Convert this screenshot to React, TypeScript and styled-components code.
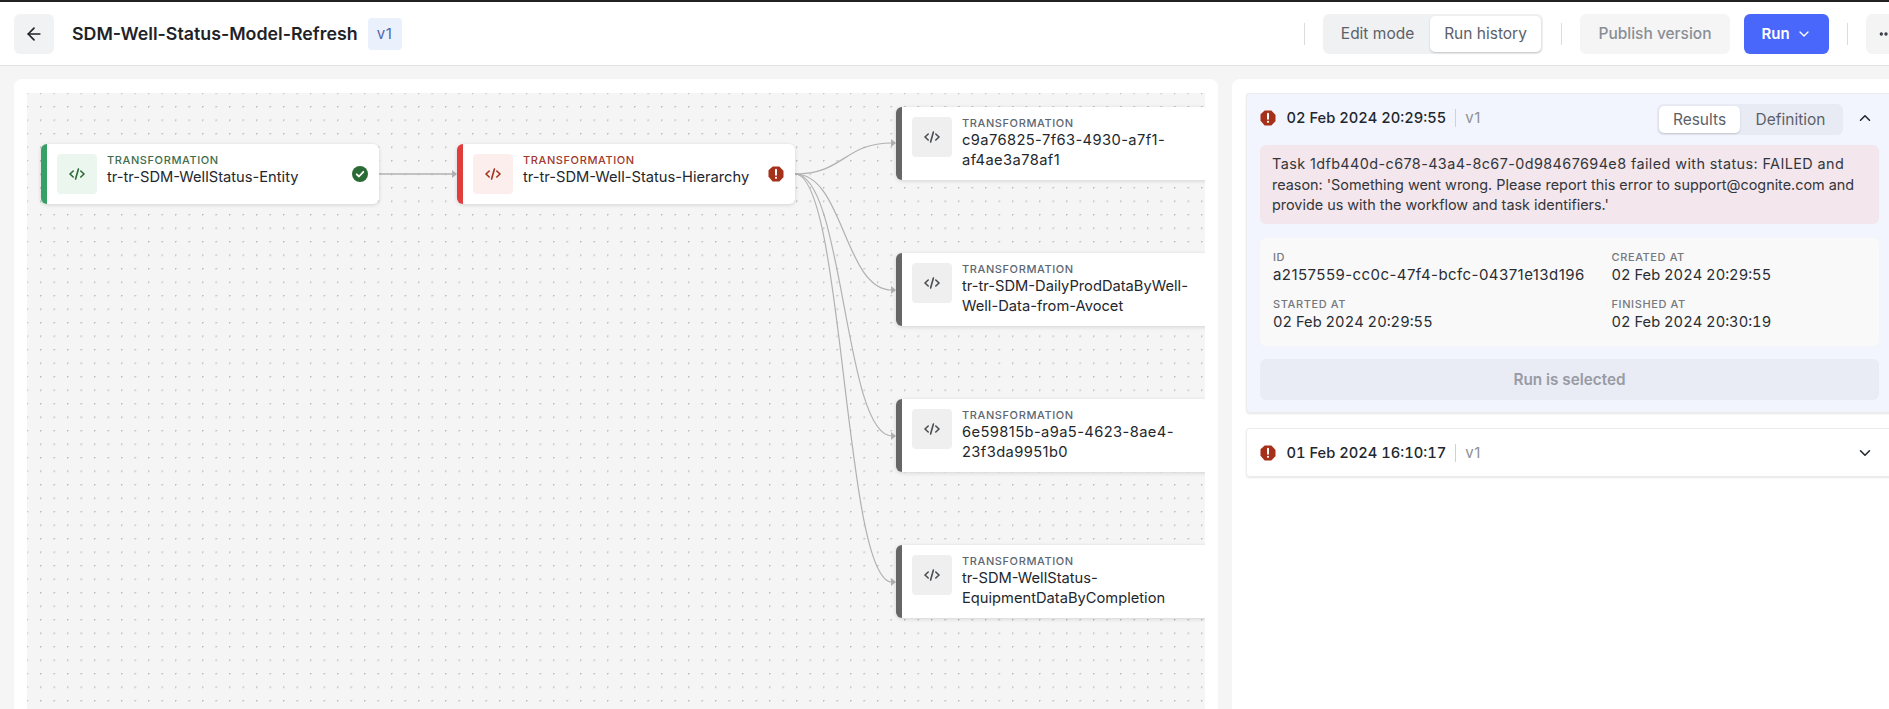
import React from "react";
import styled, { createGlobalStyle } from "styled-components";
import { ArrowLeft, ChevronDown, ChevronUp, Ellipsis } from "lucide-react";

const Global = createGlobalStyle`
  html, body { margin: 0; padding: 0; background: #f5f5f5; }
  body { font-family: Inter, "Liberation Sans", sans-serif; color: #1f2328; }
  * { box-sizing: border-box; }
`;

const Page = styled.div`
  width: 1889px;
  height: 709px;
  overflow: hidden;
  background: #f5f5f5;
  border-top: 2px solid #222222;
`;

const Header = styled.header`
  width: 1906px;
  height: 64px;
  padding: 11px 0 11px 14px;
  display: flex;
  align-items: center;
  justify-content: space-between;
  background: #ffffff;
  border-bottom: 1px solid #e2e2e2;
`;

const HeaderGroup = styled.div`
  display: flex;
  align-items: center;
`;

const IconButton = styled.button`
  width: 40px;
  height: 40px;
  border: 0;
  border-radius: 6px;
  background: #f1f2f4;
  color: #1f2328;
  display: flex;
  align-items: center;
  justify-content: center;
  padding: 0;
`;

const Title = styled.h1`
  margin: 0 10px 0 18px;
  font-size: 17.8px;
  line-height: 24px;
  font-weight: 600;
  color: #1f2328;
`;

const VersionBadge = styled.span`
  width: 34px;
  height: 32px;
  border-radius: 4px;
  background: #ebf0fd;
  color: #4f68ad;
  font-size: 15px;
  letter-spacing: 0.6px;
  display: flex;
  align-items: center;
  justify-content: center;
`;

const Divider = styled.span`
  width: 1px;
  height: 22px;
  background: #dcdcdc;
  margin: 0 18px;
`;

const Segmented = styled.div`
  width: 220px;
  height: 40px;
  padding: 2px;
  border-radius: 6px;
  background: #f0f1f3;
  display: flex;
`;

const Segment = styled.div<{ $active?: boolean; $width: number }>`
  width: ${(p) => p.$width}px;
  border-radius: 5px;
  display: flex;
  align-items: center;
  justify-content: center;
  font-size: 15.5px;
  color: #5c6169;
  background: ${(p) => (p.$active ? "#ffffff" : "transparent")};
  box-shadow: ${(p) => (p.$active ? "0 1px 2px rgba(0,0,0,.18)" : "none")};
`;

const PublishButton = styled.button`
  width: 150px;
  height: 40px;
  border: 0;
  border-radius: 6px;
  background: #f5f5f6;
  color: #8a8e94;
  font: 500 15.5px Inter, sans-serif;
`;

const RunButton = styled.button`
  width: 85px;
  height: 40px;
  margin-left: 14px;
  border: 0;
  border-radius: 6px;
  background: #4a67fb;
  color: #ffffff;
  font: 600 15px Inter, sans-serif;
  display: flex;
  align-items: center;
  justify-content: center;
  gap: 6px;
`;

const MoreButton = styled(IconButton)`
  background: #f4f4f5;
  color: #33373d;
`;

const Main = styled.main`
  height: 643px;
  padding: 13px 0 0 14px;
  display: flex;
  gap: 14px;
`;

const CanvasPanel = styled.section`
  flex: 0 0 1204px;
  padding: 14px 13px 0;
  border-radius: 8px 8px 0 0;
  background: #ffffff;
`;

const Canvas = styled.div`
  position: relative;
  height: 100%;
  overflow: hidden;
  background-color: #f5f5f5;
  background-image: radial-gradient(circle at 0.75px 0.75px, #bbbbbb 0.6px, transparent 1px);
  background-size: 13.5px 13.5px;
  background-position: 13px 13px;
`;

const Edges = styled.svg`
  position: absolute;
  inset: 0;
  width: 100%;
  height: 100%;
`;

const tones = {
  green: { strip: "#37a064", soft: "#ebf6ef", fg: "#2a6a34", label: "#3f6d4c" },
  red: { strip: "#e03d3d", soft: "#fdeeee", fg: "#a5311a", label: "#a0392c" },
  grey: { strip: "#666666", soft: "#efefef", fg: "#4a4d52", label: "#5e6672" },
};
type Tone = keyof typeof tones;

const Node = styled.div<{ $tone: Tone; $x: number; $y: number }>`
  position: absolute;
  left: ${(p) => p.$x}px;
  top: ${(p) => p.$y}px;
  width: 338px;
  padding: 10px;
  display: flex;
  align-items: flex-start;
  gap: 10px;
  background: #ffffff;
  border-left: 6px solid ${(p) => tones[p.$tone].strip};
  border-radius: 6px;
  box-shadow: 0 1px 4px rgba(0, 0, 0, 0.14);
`;

const NodeIcon = styled.div<{ $tone: Tone }>`
  flex: 0 0 40px;
  height: 40px;
  border-radius: 4px;
  display: flex;
  align-items: center;
  justify-content: center;
  background: ${(p) => tones[p.$tone].soft};
  color: ${(p) => tones[p.$tone].fg};
`;

const NodeText = styled.div`
  width: 240px;
`;

const Eyebrow = styled.div<{ $tone: Tone }>`
  font-size: 11px;
  line-height: 12px;
  font-weight: 500;
  letter-spacing: 0.6px;
  color: ${(p) => tones[p.$tone].label};
`;

const NodeName = styled.div<{ $uuid?: boolean }>`
  margin-top: 1px;
  font-size: 14.7px;
  line-height: 20px;
  letter-spacing: ${(p) => (p.$uuid ? "0.4px" : "0")};
  color: #23272d;
`;

const StatusSlot = styled.div`
  position: absolute;
  right: 11px;
  top: 22px;
  display: flex;
`;

const RunsPanel = styled.aside`
  flex: 0 0 675px;
  padding: 14px;
  display: flex;
  flex-direction: column;
  gap: 15px;
  background: #ffffff;
  border-radius: 8px 0 0 0;
`;

const RunCard = styled.article<{ $open?: boolean }>`
  padding: ${(p) => (p.$open ? "9px 14px 13px" : "9px 14px")};
  background: ${(p) => (p.$open ? "#f2f5fd" : "#ffffff")};
  border-radius: 4px;
  box-shadow: inset 0 0 0 1px #ececee, 0 1px 2px rgba(0, 0, 0, 0.1);
`;

const RunHeader = styled.div`
  width: 619px;
  height: 31px;
  display: flex;
  align-items: center;
`;

const RunDate = styled.span`
  margin-left: 10.5px;
  font-size: 14.7px;
  font-weight: 500;
  font-variant-numeric: tabular-nums;
  color: #23272d;
`;

const RunVersion = styled.span`
  margin-left: 9px;
  padding-left: 9px;
  border-left: 1px solid #cfd2d8;
  font-size: 15px;
  line-height: 18px;
  letter-spacing: 0.6px;
  color: #8d9096;
`;

const RunTabs = styled.div`
  margin: 4px 0 0 auto;
  flex: 0 0 186px;
  height: 31px;
  padding: 2px;
  display: flex;
  border-radius: 6px;
  background: #e8ebf3;
`;

const RunTab = styled.div<{ $active?: boolean }>`
  width: ${(p) => (p.$active ? "81px" : "101px")};
  display: flex;
  align-items: center;
  justify-content: center;
  border-radius: 5px;
  font-size: 15.5px;
  color: #5c6169;
  background: ${(p) => (p.$active ? "#ffffff" : "transparent")};
  box-shadow: ${(p) => (p.$active ? "0 1px 2px rgba(0,0,0,.16)" : "none")};
`;

const ChevronSlot = styled.div<{ $open?: boolean }>`
  margin-left: ${(p) => (p.$open ? "12px" : "auto")};
  margin-right: 4px;
  width: 20px;
  display: flex;
  justify-content: center;
  color: #1f2328;
`;

const RunBody = styled.div`
  width: 619px;
  margin-top: 12px;
`;

const ErrorBox = styled.div`
  height: 79px;
  padding: 9px 12px;
  border-radius: 6px;
  background: #f3e6ec;
  font-size: 14.4px;
  line-height: 20.5px;
  color: #33363b;
`;

const ErrorLine = styled.div<{ $wide?: boolean }>`
  white-space: nowrap;
  letter-spacing: ${(p) => (p.$wide ? "0.41px" : "0")};
`;

const MetaGrid = styled.dl`
  height: 108px;
  margin: 14px 0 13px;
  padding: 13px;
  display: grid;
  grid-template-columns: 338.5px 1fr;
  grid-template-rows: 34px 34px;
  row-gap: 13px;
  border-radius: 6px;
  background: #f9f9fa;
`;

const MetaItem = styled.div``;

const MetaLabel = styled.dt`
  font-size: 11px;
  line-height: 12px;
  font-weight: 500;
  letter-spacing: 0.6px;
  color: #75787e;
`;

const MetaValue = styled.dd<{ $uuid?: boolean }>`
  margin: 2px 0 0;
  font-size: ${(p) => (p.$uuid ? "15px" : "14.7px")};
  line-height: 20px;
  letter-spacing: ${(p) => (p.$uuid ? "0.44px" : "0")};
  font-variant-numeric: ${(p) => (p.$uuid ? "normal" : "tabular-nums")};
  color: #2a2d32;
`;

const SelectedButton = styled.div`
  height: 41px;
  display: flex;
  align-items: center;
  justify-content: center;
  border-radius: 6px;
  background: #e9ecf5;
  color: #989ba3;
  font-size: 15.3px;
  font-weight: 600;
`;

const CodeIcon = () => (
  <svg width="16" height="12" viewBox="0 0 16 12" fill="none" stroke="currentColor" strokeWidth="1.6" strokeLinecap="round" strokeLinejoin="round">
    <path d="M4.2 3 1 6l3.2 3" />
    <path d="M11.8 3 15 6l-3.2 3" />
    <path d="M9.4 1 6.6 11" />
  </svg>
);

const ErrorIcon = () => (
  <svg width="16" height="16" viewBox="0 0 16 16" style={{ flex: "0 0 16px" }}>
    <path d="M5.1.5h5.8c.3 0 .5.1.7.3l3.6 3.6c.2.2.3.4.3.7v5.800c0 .3-.1.5-.3.7l-3.6 3.6c-.2.2-.4.3-.7.3H5.1c-.3 0-.5-.1-.7-.3L.8 11.100c-.2-.2-.3-.4-.3-.7V4.600c0-.3.1-.5.3-.7L4.400.8c.2-.2.4-.3.7-.3z" fill="#a5311a" />
    <path d="M8 3.800v5" stroke="#fff" strokeWidth="2" strokeLinecap="round" />
    <circle cx="8" cy="11.800" r="1.100" fill="#fff" />
  </svg>
);

const CheckIcon = () => (
  <svg width="16" height="16" viewBox="0 0 16 16">
    <circle cx="8" cy="8" r="8" fill="#2a6a34" />
    <path d="M4.700 8.300 7 10.500l4.300-4.700" fill="none" stroke="#fff" strokeWidth="1.800" strokeLinecap="round" strokeLinejoin="round" />
  </svg>
);

const targets = [50, 197, 343, 489];

const Arrow = ({ x, y }: { x: number; y: number }) => (
  <path d={`M${x} ${y}l-5 -4v8z`} fill="#b1b1b1" />
);

const nodes: { x: number; y: number; tone: Tone; name: string; status?: "ok" | "error"; uuid?: boolean }[] = [
  { x: 14, y: 51, tone: "green", name: "tr-tr-SDM-WellStatus-Entity", status: "ok" },
  { x: 430, y: 51, tone: "red", name: "tr-tr-SDM-Well-Status-Hierarchy", status: "error" },
  { x: 869, y: 14, tone: "grey", name: "c9a76825-7f63-4930-a7f1-af4ae3a78af1", uuid: true },
  { x: 869, y: 160, tone: "grey", name: "tr-tr-SDM-DailyProdDataByWell-Well-Data-from-Avocet" },
  { x: 869, y: 306, tone: "grey", name: "6e59815b-a9a5-4623-8ae4-23f3da9951b0", uuid: true },
  { x: 869, y: 452, tone: "grey", name: "tr-SDM-WellStatus-EquipmentDataByCompletion" },
];

export default function App() {
  return (
    <Page>
      <Global />
      <Header>
        <HeaderGroup>
          <IconButton aria-label="Back">
            <ArrowLeft size={20} strokeWidth={2} />
          </IconButton>
          <Title>SDM-Well-Status-Model-Refresh</Title>
          <VersionBadge>v1</VersionBadge>
        </HeaderGroup>
        <HeaderGroup>
          <Divider />
          <Segmented>
            <Segment $width={106}>Edit mode</Segment>
            <Segment $width={112} $active>Run history</Segment>
          </Segmented>
          <Divider />
          <PublishButton>Publish version</PublishButton>
          <RunButton>
            Run <ChevronDown size={16} strokeWidth={2} />
          </RunButton>
          <Divider />
          <MoreButton aria-label="More">
            <Ellipsis size={16} strokeWidth={3} />
          </MoreButton>
        </HeaderGroup>
      </Header>
      <Main>
        <CanvasPanel>
          <Canvas>
            <Edges>
              <g fill="none" stroke="#b1b1b1" strokeWidth="1.2">
                <path d="M352 81H425" strokeWidth="1.500" />
                {targets.map((y) => (
                  <path key={y} d={`M768 81C817 81 817 ${y} 865 ${y}`} />
                ))}
              </g>
              <Arrow x={430} y={81} />
              {targets.map((y) => (
                <Arrow key={y} x={869} y={y} />
              ))}
            </Edges>
            {nodes.map((n) => (
              <Node key={n.name} $tone={n.tone} $x={n.x} $y={n.y}>
                <NodeIcon $tone={n.tone}>
                  <CodeIcon />
                </NodeIcon>
                <NodeText>
                  <Eyebrow $tone={n.tone}>TRANSFORMATION</Eyebrow>
                  <NodeName $uuid={n.uuid}>{n.name}</NodeName>
                </NodeText>
                {n.status && (
                  <StatusSlot>{n.status === "ok" ? <CheckIcon /> : <ErrorIcon />}</StatusSlot>
                )}
              </Node>
            ))}
          </Canvas>
        </CanvasPanel>
        <RunsPanel>
          <RunCard $open>
            <RunHeader>
              <ErrorIcon />
              <RunDate>02 Feb 2024 20:29:55</RunDate>
              <RunVersion>v1</RunVersion>
              <RunTabs>
                <RunTab $active>Results</RunTab>
                <RunTab>Definition</RunTab>
              </RunTabs>
              <ChevronSlot $open>
                <ChevronUp size={18} strokeWidth={2} />
              </ChevronSlot>
            </RunHeader>
            <RunBody>
              <ErrorBox>
                <ErrorLine $wide>Task 1dfb440d-c678-43a4-8c67-0d98467694e8 failed with status: FAILED and</ErrorLine>
                <ErrorLine>reason: 'Something went wrong. Please report this error to support@cognite.com and</ErrorLine>
                <ErrorLine>provide us with the workflow and task identifiers.'</ErrorLine>
              </ErrorBox>
              <MetaGrid>
                <MetaItem>
                  <MetaLabel>ID</MetaLabel>
                  <MetaValue $uuid>a2157559-cc0c-47f4-bcfc-04371e13d196</MetaValue>
                </MetaItem>
                <MetaItem>
                  <MetaLabel>CREATED AT</MetaLabel>
                  <MetaValue>02 Feb 2024 20:29:55</MetaValue>
                </MetaItem>
                <MetaItem>
                  <MetaLabel>STARTED AT</MetaLabel>
                  <MetaValue>02 Feb 2024 20:29:55</MetaValue>
                </MetaItem>
                <MetaItem>
                  <MetaLabel>FINISHED AT</MetaLabel>
                  <MetaValue>02 Feb 2024 20:30:19</MetaValue>
                </MetaItem>
              </MetaGrid>
              <SelectedButton>Run is selected</SelectedButton>
            </RunBody>
          </RunCard>
          <RunCard>
            <RunHeader>
              <ErrorIcon />
              <RunDate>01 Feb 2024 16:10:17</RunDate>
              <RunVersion>v1</RunVersion>
              <ChevronSlot>
                <ChevronDown size={18} strokeWidth={2} />
              </ChevronSlot>
            </RunHeader>
          </RunCard>
        </RunsPanel>
      </Main>
    </Page>
  );
}
